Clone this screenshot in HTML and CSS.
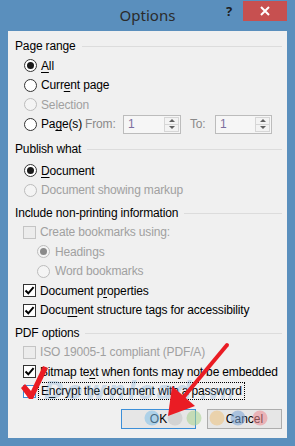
FILE: index.html
```html
<!DOCTYPE html>
<html lang="en">
<head>
    <meta charset="UTF-8">
    <title>Options</title>
    <link rel="stylesheet" href="styles.css">
</head>
<body>
    <div class="window">
        <div class="titlebar">
            <span class="title">Options</span>
            <span class="help">?</span>
            <span class="close">
                <svg width="10" height="10" viewBox="0 0 10 10"><path d="M1 1L9 9M9 1L1 9" stroke="#fff" stroke-width="2"/></svg>
            </span>
        </div>

        <div class="content">
            <!-- Page range -->
            <div class="group g-range">
                <div class="group-title"><span>Page range</span></div>
                <div class="row"><span class="radio checked"></span><span class="label"><u>A</u>ll</span></div>
                <div class="row"><span class="radio"></span><span class="label">Curr<u>e</u>nt page</span></div>
                <div class="row disabled"><span class="radio"></span><span class="label">Selection</span></div>
                <div class="row">
                    <span class="radio"></span><span class="label pages">Pa<u>g</u>e(s)</span>
                    <span class="field-label from">From:</span>
                    <span class="spin s-from"><span class="value">1</span><span class="spin-btns"><i class="up"></i><i class="down"></i></span></span>
                    <span class="field-label to">To:</span>
                    <span class="spin s-to"><span class="value">1</span><span class="spin-btns"><i class="up"></i><i class="down"></i></span></span>
                </div>
            </div>

            <!-- Publish what -->
            <div class="group g-publish">
                <div class="group-title"><span>Publish what</span></div>
                <div class="row"><span class="radio checked"></span><span class="label"><u>D</u>ocument</span></div>
                <div class="row disabled"><span class="radio"></span><span class="label">Document showing markup</span></div>
            </div>

            <!-- Include non-printing information -->
            <div class="group g-include">
                <div class="group-title"><span>Include non-printing information</span></div>
                <div class="row check-row disabled"><span class="check"></span><span class="label">Create bookmarks using:</span></div>
                <div class="row sub disabled"><span class="radio checked"></span><span class="label">Headings</span></div>
                <div class="row sub disabled"><span class="radio"></span><span class="label">Word bookmarks</span></div>
                <div class="row check-row"><span class="check checked"><svg viewBox="0 0 11 11"><path d="M1.5 5.5L4.3 8.3L9.6 2.2" fill="none" stroke="#000" stroke-width="2"/></svg></span><span class="label">Document p<u>r</u>operties</span></div>
                <div class="row check-row"><span class="check checked"><svg viewBox="0 0 11 11"><path d="M1.5 5.5L4.3 8.3L9.6 2.2" fill="none" stroke="#000" stroke-width="2"/></svg></span><span class="label">Docu<u>m</u>ent structure tags for accessibility</span></div>
            </div>

            <!-- PDF options -->
            <div class="group g-pdf">
                <div class="group-title"><span>PDF options</span></div>
                <div class="row check-row disabled"><span class="check"></span><span class="label">ISO 19005-1 compliant (PDF/A)</span></div>
                <div class="row check-row"><span class="check checked"><svg viewBox="0 0 11 11"><path d="M1.5 5.5L4.3 8.3L9.6 2.2" fill="none" stroke="#000" stroke-width="2"/></svg></span><span class="label">Bitmap te<u>x</u>t when fonts may not be embedded</span></div>
                <div class="row check-row"><span class="check focus"></span><span class="label focused">E<u>n</u>crypt the document with a password</span></div>
            </div>

            <div class="buttons">
                <button class="btn default">OK</button>
                <button class="btn">Cancel</button>
            </div>
        </div>

        <!-- watermark and red annotations drawn over the screenshot -->
        <div class="watermark"><span class="wm-word">Download</span><span class="wm-vn">.vn</span></div>
        <svg class="overlay" width="295" height="446" viewBox="0 0 295 446">
            <g opacity="0.55">
                <circle cx="152" cy="418" r="7.5" fill="#7fc0ea"/>
                <circle cx="175" cy="418" r="7.5" fill="#c4c4c4"/>
                <circle cx="194" cy="418" r="7.5" fill="#a9d38f"/>
                <circle cx="217" cy="418" r="7.5" fill="#efc27e"/>
                <circle cx="238" cy="418" r="7.5" fill="#7aa4d6"/>
                <circle cx="260" cy="418" r="7.5" fill="#ee8a92"/>
            </g>
            <path d="M227 345L182 399" stroke="#ea1c24" stroke-width="4" stroke-linecap="round"/>
            <polygon points="168,416 172,386 195,406" fill="#ea1c24"/>
            <polygon points="21,388 25,384 31,391 43,366 48,368 33,399 29,399" fill="#ea1c24"/>
        </svg>
    </div>
</body>
</html>
```

FILE: styles.css
```css
* {
    margin: 0;
    padding: 0;
    box-sizing: border-box;
}

body {
    width: 295px;
    height: 446px;
    overflow: hidden;
    font-family: "Liberation Sans", Arial, sans-serif;
    font-size: 12px;
    letter-spacing: -0.15px;
    color: #000;
}

u {
    text-decoration-thickness: 1px;
    text-underline-offset: 2px;
}

.window {
    position: relative;
    width: 295px;
    height: 446px;
    background-color: #5a8fbd;
    padding: 0 8px 8px;
}

/* Title bar */
.titlebar {
    height: 31px;
    display: flex;
    align-items: flex-start;
}

.title {
    flex: 1;
    padding-left: 65px;
    text-align: center;
    font-family: "Noto Sans", sans-serif;
    font-size: 15px;
    letter-spacing: 0;
    line-height: 31px;
    color: #2b2b2b;
}

.help {
    width: 14px;
    margin-right: 7px;
    text-align: center;
    font-family: "Noto Sans", sans-serif;
    font-weight: bold;
    font-size: 13px;
    line-height: 22px;
    color: #1e1e1e;
}

.close {
    width: 44px;
    height: 20px;
    margin-top: 1px;
    background-color: #c75050;
    display: flex;
    align-items: center;
    justify-content: center;
}

/* Dialog body */
.content {
    height: 407px;
    background-color: #f0f0f0;
    padding: 5px 5px 0 7px;
}

.group-title {
    height: 20px;
    display: flex;
    align-items: center;
}

.group-title::after {
    content: "";
    flex: 1;
    height: 1px;
    margin: 1px 0 0 6px;
    background-color: #dcdcdc;
}

.g-publish { margin-top: 5px; }
.g-publish .group-title { margin-bottom: 2px; }
.g-include { margin-top: 2.5px; }
.g-pdf { margin-top: 2.5px; }

.row {
    height: 19.5px;
    display: flex;
    align-items: center;
    padding-left: 9px;
    white-space: nowrap;
}

.row .label {
    margin-left: 4px;
}

.row.sub {
    padding-left: 22px;
}

.row.sub .label {
    margin-left: 5px;
}

.row.check-row {
    padding-left: 8px;
}

.row.check-row .label {
    margin-left: 4px;
}

.disabled .label {
    color: #a0a0a0;
}

/* Radio buttons */
.radio {
    width: 13px;
    height: 13px;
    border: 1px solid #333;
    border-radius: 50%;
    background-color: #fff;
    display: flex;
    align-items: center;
    justify-content: center;
    flex-shrink: 0;
}

.radio.checked::after {
    content: "";
    width: 7px;
    height: 7px;
    border-radius: 50%;
    background-color: #1a1a1a;
}

.disabled .radio {
    border-color: #bcbcbc;
    background-color: #f4f4f4;
}

.disabled .radio.checked::after {
    background-color: #8a8a8a;
}

/* Checkboxes */
.check {
    width: 13px;
    height: 13px;
    border: 1px solid #333;
    background-color: #fff;
    flex-shrink: 0;
    display: flex;
}

.check svg {
    width: 11px;
    height: 11px;
}

.disabled .check {
    border-color: #c4c4c4;
    background-color: #ececec;
}

.check.focus {
    border-color: #3c8fd8;
}

.label.focused {
    outline: 1px dotted #000;
    outline-offset: 1px;
    padding: 0 1px;
}

/* Page range fields */
.label.pages {
    width: 44px;
}

.field-label {
    color: #8a8a8a;
}

.field-label.from {
    width: 38px;
}

.field-label.to {
    width: 25px;
    margin-left: 9px;
}

.spin {
    height: 19px;
    border: 1px solid #bcbcbc;
    background-color: #f6f6f6;
    display: flex;
    align-items: center;
    padding: 1px 1px 1px 4px;
}

.s-from { width: 58px; }
.s-to { width: 57px; }

.spin .value {
    flex: 1;
    color: #7b6f9e;
}

.spin-btns {
    width: 15px;
    height: 15px;
    display: flex;
    flex-direction: column;
    border: 1px solid #d6d6d6;
    background-color: #f3f3f3;
}

.spin-btns i {
    flex: 1;
    display: flex;
    align-items: center;
    justify-content: center;
}

.spin-btns i.up {
    border-bottom: 1px solid #d6d6d6;
}

.spin-btns i::after {
    content: "";
    border-left: 3px solid transparent;
    border-right: 3px solid transparent;
}

.spin-btns i.up::after {
    border-bottom: 3px solid #606060;
}

.spin-btns i.down::after {
    border-top: 3px solid #606060;
}

/* Buttons */
.buttons {
    display: flex;
    justify-content: flex-end;
    gap: 11px;
    margin-top: 7.5px;
}

.btn {
    width: 75px;
    height: 20px;
    font-family: inherit;
    font-size: 12px;
    background-color: #e6e6e6;
    border: 1px solid #adadad;
    color: #000;
}

.btn.default {
    border-color: #3c8fd8;
}

/* Watermark and annotations */
.watermark {
    position: absolute;
    left: 44px;
    top: 377px;
    font-family: "DejaVu Sans", sans-serif;
    font-weight: bold;
    font-style: italic;
    font-size: 24px;
    line-height: 28px;
    color: rgba(110, 165, 215, 0.3);
    pointer-events: none;
    white-space: nowrap;
}

.wm-word {
    letter-spacing: 2px;
}

.wm-vn {
    margin-left: 6px;
    font-size: 20px;
}

.overlay {
    position: absolute;
    left: 0;
    top: 0;
    pointer-events: none;
}
```
